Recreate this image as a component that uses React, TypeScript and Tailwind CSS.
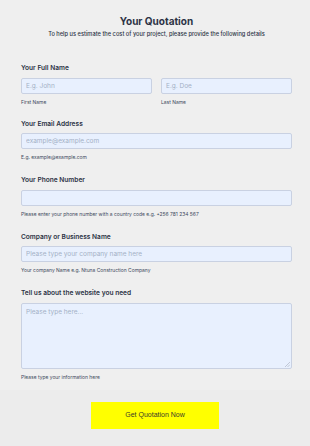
import { ReactNode } from 'react'

const labelCls = 'block text-[6.6px] leading-[10px] font-semibold text-[#2c3345] mb-[4.5px]'
const inputCls =
  'block w-full h-[16px] px-[4px] bg-[#e8f0fe] border border-[#c9d1e2] rounded-[2px] text-[6.5px] text-[#2c3345] placeholder:text-[#a4b0c6] outline-none'
const hintCls = 'block text-[4.95px] leading-[8px] mt-[4px] text-[#3e4a60]'

function Field({ label, hint, children }: { label: string; hint?: string; children: ReactNode }) {
  return (
    <div className="mb-[14px]">
      <label className={labelCls}>{label}</label>
      {children}
      {hint && <span className={hintCls}>{hint}</span>}
    </div>
  )
}

export default function App() {
  return (
    <div className="w-full min-h-[446px] bg-[#ececec] font-['Inter',sans-serif]">
      <div className="bg-[#efefef] pl-[21px] pr-[18px] pt-[14px] pb-[9px]">
        <h1 className="text-center text-[10px] leading-[14px] font-bold text-[#2c3345]">
          Your Quotation
        </h1>
        <p className="text-center text-[5.7px] leading-[8px] mt-[2px] font-medium text-[#2c3345]">
          To help us estimate the cost of your project, please provide the following details
        </p>

        <div className="mt-[25px]">
          <div className="mb-[13px]">
            <label className={labelCls}>Your Full Name</label>
            <div className="flex gap-[9px]">
              <div className="flex-1">
                <input className={inputCls} placeholder="E.g. John" />
                <span className={hintCls}>First Name</span>
              </div>
              <div className="flex-1">
                <input className={inputCls} placeholder="E.g. Doe" />
                <span className={hintCls}>Last Name</span>
              </div>
            </div>
          </div>

          <Field label="Your Email Address" hint="E.g. example@example.com">
            <input className={inputCls} placeholder="example@example.com" />
          </Field>

          <Field
            label="Your Phone Number"
            hint="Please enter your phone number with a country code e.g. +256 781 234 567"
          >
            <input className={inputCls} />
          </Field>

          <Field label="Company or Business Name" hint="Your company Name e.g. Ntuna Construction Company">
            <input className={inputCls} placeholder="Please type your company name here" />
          </Field>

          <div>
            <label className={labelCls}>Tell us about the website you need</label>
            <div className="relative">
              <textarea
                className="block w-full h-[66px] px-[4px] py-[3px] bg-[#e8f0fe] border border-[#c9d1e2] rounded-[2px] text-[6.5px] leading-[10px] text-[#2c3345] placeholder:text-[#a4b0c6] outline-none resize-none"
                placeholder="Please type here..."
              />
              <svg className="absolute right-[2px] bottom-[2px]" width="5" height="5" viewBox="0 0 5 5">
                <path d="M5 0L0 5M5 2.5L2.5 5" stroke="#b5bccb" strokeWidth="0.8" />
              </svg>
            </div>
            <span className={hintCls}>Please type your information here</span>
          </div>
        </div>
      </div>

      <div className="flex justify-center pt-[12px]">
        <button className="w-[128px] h-[27px] bg-[#ffff00] text-[7px] text-[#3a3a2a] font-['Liberation_Sans',Arial,sans-serif]">
          Get Quotation Now
        </button>
      </div>
    </div>
  )
}
